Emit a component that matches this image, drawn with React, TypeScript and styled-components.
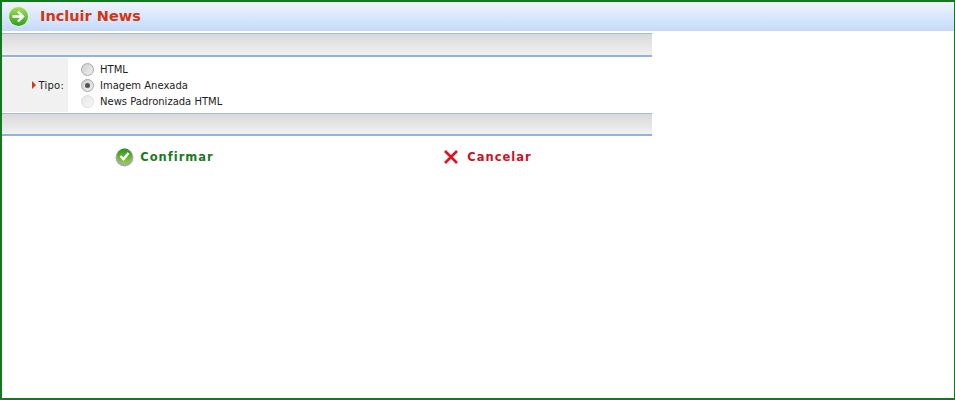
import { createGlobalStyle, styled } from "styled-components"

const GlobalStyle = createGlobalStyle`
  html, body {
    margin: 0;
    padding: 0;
    background: #fff;
  }
`

const Frame = styled.div`
  box-sizing: border-box;
  width: 955px;
  height: 400px;
  border: 2px solid #13791f;
  border-right-width: 1px;
  font-family: "DejaVu Sans", Verdana, sans-serif;
  overflow: hidden;
`

const Header = styled.div`
  height: 29px;
  display: flex;
  align-items: center;
  gap: 11px;
  padding-left: 6px;
  background: linear-gradient(#eef5fe, #c4dafa);
`

const Title = styled.h1`
  margin: 0;
  font-size: 14.5px;
  font-weight: bold;
  color: #d43510;
  position: relative;
  top: -1px;
`

const Form = styled.div`
  width: 650px;
  margin-top: 2px;
`

const Bar = styled.div<{ $height: number }>`
  box-sizing: border-box;
  height: ${(p) => p.$height}px;
  border-top: 1px solid #a9bccb;
  border-bottom: 2px solid #8fb2de;
  background: linear-gradient(#d9d9d9, #f1f1f1);
`

const Row = styled.div`
  display: flex;
  height: 54px;
  margin: 1px 0;
`

const Label = styled.div`
  width: 66px;
  box-sizing: border-box;
  padding-right: 4px;
  background: #f1f1f1;
  display: flex;
  align-items: center;
  justify-content: flex-end;
  gap: 3px;
  font-size: 10px;
  letter-spacing: 0.2px;
  color: #222;
`

const Marker = styled.span`
  width: 0;
  height: 0;
  border-left: 4px solid #d03a10;
  border-top: 4px solid transparent;
  border-bottom: 4px solid transparent;
`

const Options = styled.div`
  display: flex;
  flex-direction: column;
  padding: 3px 0 0 13px;
`

const Option = styled.div`
  height: 16px;
  display: flex;
  align-items: center;
  gap: 6px;
  font-size: 10px;
  color: #222;
`

const Radio = styled.span<{ $checked?: boolean; $disabled?: boolean }>`
  box-sizing: border-box;
  width: 13px;
  height: 13px;
  border-radius: 50%;
  border: 1px solid ${(p) => (p.$disabled ? "#dcdcdc" : "#a8a8a8")};
  background: ${(p) =>
    p.$disabled
      ? "linear-gradient(135deg, #e6e6e6, #f8f8f8)"
      : "linear-gradient(135deg, #cfcfcf, #f0f0f0)"};
  display: flex;
  align-items: center;
  justify-content: center;

  &::after {
    content: "";
    display: ${(p) => (p.$checked ? "block" : "none")};
    width: 5px;
    height: 5px;
    border-radius: 50%;
    background: #555;
  }
`

const Actions = styled.div`
  display: grid;
  grid-template-columns: 323px 323px;
  padding-left: 1px;
  margin-top: 10px;
`

const Action = styled.div<{ $color: string; $gap: number }>`
  display: flex;
  align-items: center;
  justify-content: center;
  gap: ${(p) => p.$gap}px;
  height: 22px;
  font-size: 11.5px;
  font-weight: bold;
  letter-spacing: 1px;
  color: ${(p) => p.$color};
`

function ArrowIcon() {
  return (
    <svg width="21" height="21" viewBox="0 0 21 21">
      <defs>
        <linearGradient id="arrowBall" x1="0" y1="0" x2="0" y2="1">
          <stop offset="0" stopColor="#a5e05a" />
          <stop offset="1" stopColor="#2f9e1e" />
        </linearGradient>
      </defs>
      <circle cx="10.5" cy="10.5" r="10.5" fill="#e4efdc" />
      <circle cx="10.5" cy="10.5" r="9.5" fill="url(#arrowBall)" />
      <path d="M4.5 10.5h10M10 5.5l5 5-5 5" fill="none" stroke="#fff" strokeWidth="2.4" />
    </svg>
  )
}

function CheckIcon() {
  return (
    <svg width="19" height="20" viewBox="0 0 19 20">
      <defs>
        <linearGradient id="checkBall" x1="0" y1="0" x2="0" y2="1">
          <stop offset="0" stopColor="#2f8f22" />
          <stop offset="1" stopColor="#8fd03c" />
        </linearGradient>
      </defs>
      <circle cx="9.5" cy="10.5" r="9" fill="#a9a9a9" />
      <circle cx="9.5" cy="9" r="7.5" fill="url(#checkBall)" />
      <path d="M5.5 9l3 3.2 5-6.2" fill="none" stroke="#fff" strokeWidth="2.4" />
    </svg>
  )
}

function CrossIcon() {
  return (
    <svg width="16" height="14" viewBox="0 0 16 14">
      <path d="M2 1l12 12M14 1L2 13" fill="none" stroke="#e0101c" strokeWidth="2.6" />
    </svg>
  )
}

export default function App() {
  return (
    <Frame>
      <GlobalStyle />
      <Header>
        <ArrowIcon />
        <Title>Incluir News</Title>
      </Header>
      <Form>
        <Bar $height={24} />
        <Row>
          <Label>
            <Marker />
            Tipo:
          </Label>
          <Options>
            <Option>
              <Radio />
              HTML
            </Option>
            <Option>
              <Radio $checked />
              Imagem Anexada
            </Option>
            <Option>
              <Radio $disabled />
              News Padronizada HTML
            </Option>
          </Options>
        </Row>
        <Bar $height={23} />
        <Actions>
          <Action $color="#1c7a1e" $gap={6}>
            <CheckIcon />
            Confirmar
          </Action>
          <Action $color="#d0101c" $gap={8}>
            <CrossIcon />
            Cancelar
          </Action>
        </Actions>
      </Form>
    </Frame>
  )
}
